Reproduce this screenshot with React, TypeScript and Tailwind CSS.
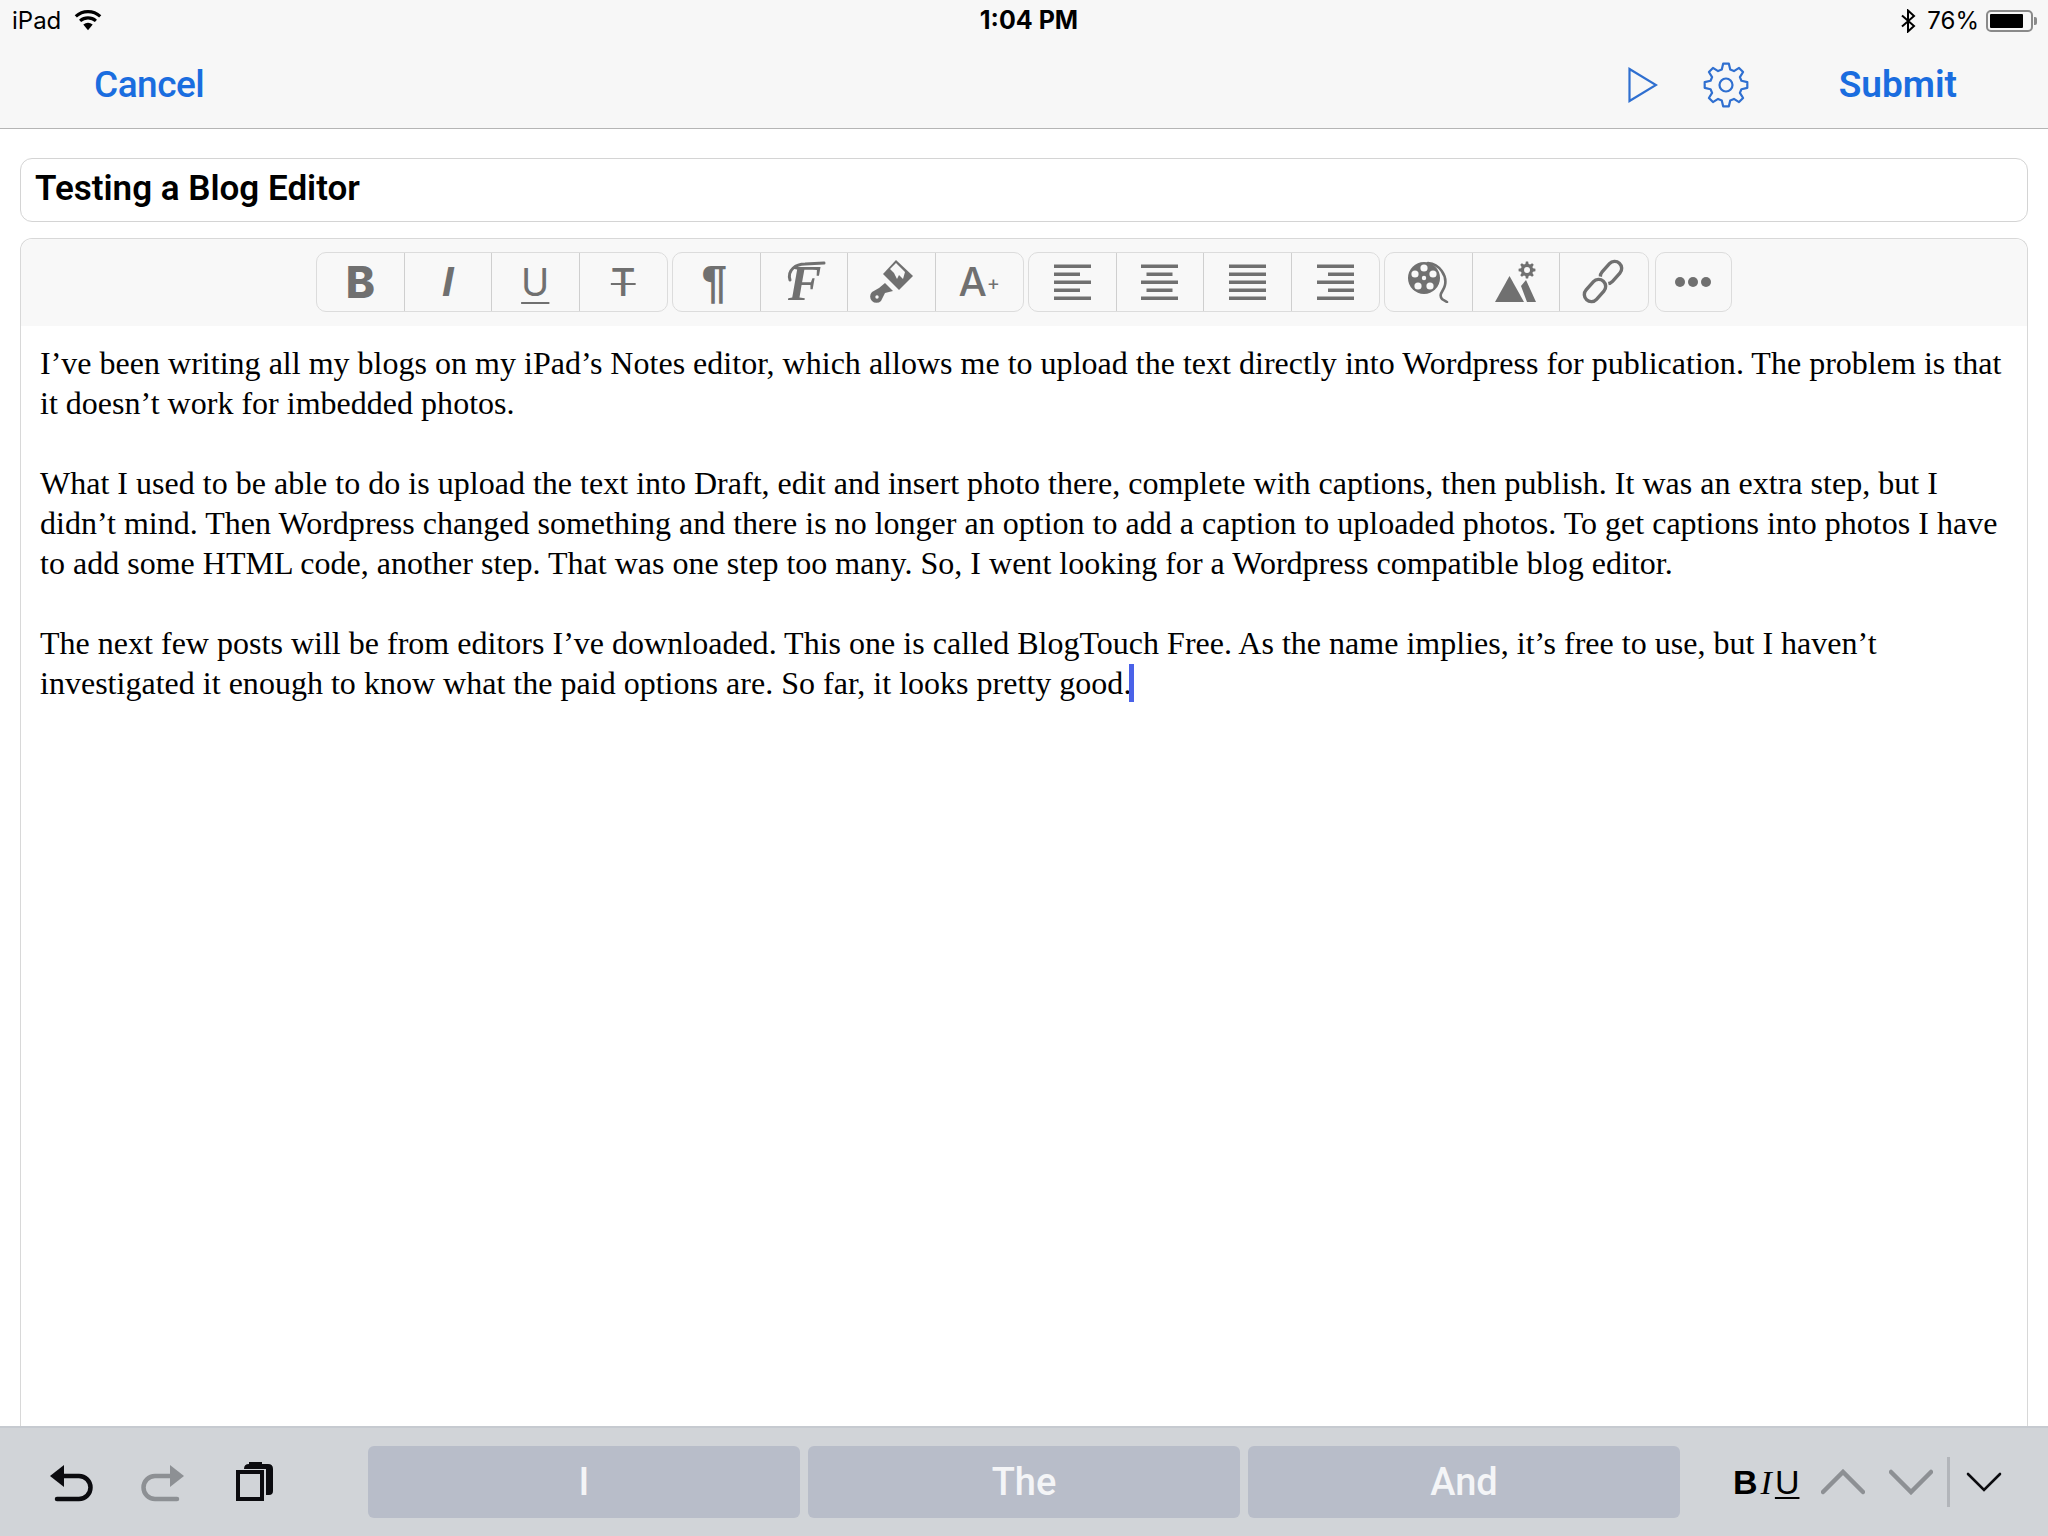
import React from "react";

const gearPath = (cx: number, cy: number, ro: number, ri: number, n: number) => {
  const pts: string[] = [];
  for (let i = 0; i < n; i++) {
    const a = (i * 2 * Math.PI) / n - Math.PI / 2;
    const s = (2 * Math.PI) / n;
    const seq: [number, number][] = [
      [ri, a - s * 0.34],
      [ro, a - s * 0.17],
      [ro, a + s * 0.17],
      [ri, a + s * 0.34],
    ];
    for (const [r, t] of seq) pts.push(`${(cx + r * Math.cos(t)).toFixed(2)} ${(cy + r * Math.sin(t)).toFixed(2)}`);
  }
  return "M" + pts.join("L") + "Z";
};

const Cell = ({ children, last }: { children: React.ReactNode; last?: boolean }) => (
  <div className={`w-[87.5px] h-full flex items-center justify-center ${last ? "" : "border-r border-[#cfcfcf]"}`}>{children}</div>
);

const Group = ({ children, className = "" }: { children: React.ReactNode; className?: string }) => (
  <div className={`h-[60px] flex border border-[#dcdcdc] rounded-[10px] ${className}`}>{children}</div>
);

const Align = ({ kind }: { kind: "l" | "c" | "j" | "r" }) => {
  const short = kind === "j" ? 37 : 26;
  const x = kind === "l" ? 0 : kind === "c" ? 5.5 : kind === "r" ? 11 : 0;
  return (
    <svg width="37" height="36" fill="#707070">
      {[0, 1, 2, 3, 4].map((i) => (
        <rect key={i} x={i % 2 ? x : 0} y={i * 8 + 0.5} width={i % 2 ? short : 37} height="3.5" />
      ))}
    </svg>
  );
};

const sans = "[font-family:Inter,'Liberation_Sans',sans-serif]";

export default function App() {
  return (
    <div className="w-[2048px] h-[1536px] flex flex-col bg-white overflow-hidden [font-family:Inter,'Liberation_Sans',sans-serif]">
      <header className="h-[129px] shrink-0 bg-[#f7f7f7] border-b border-[#b5b5b5] flex flex-col">
        <div className="h-[40px] flex items-center justify-between pl-[12px] pr-[11px] pt-[1px] text-[24px] text-black">
          <div className="flex items-center gap-[12px] w-[400px]">
            <span>iPad</span>
            <svg width="30" height="24" viewBox="0 0 28 22" className="mb-[2px]">
              <path d="M14 20.5 L9.6 15.3 A7 7 0 0 1 18.4 15.3 Z" fill="#000" />
              <path d="M6.6 11.8 A11.5 11.5 0 0 1 21.4 11.8" fill="none" stroke="#000" strokeWidth="3" />
              <path d="M2.6 7.6 A17 17 0 0 1 25.4 7.6" fill="none" stroke="#000" strokeWidth="3" />
            </svg>
          </div>
          <span className="font-bold text-[25px] ml-[9px]">1:04 PM</span>
          <div className="flex items-center justify-end w-[400px]">
            <svg width="16" height="24" viewBox="0 0 16 24" fill="none" stroke="#000" strokeWidth="2">
              <path d="M2 6.5 L14 17 L8 22.5 V1.5 L14 7 L2 17.5" />
            </svg>
            <span className="ml-[11px]">76%</span>
            <div className="ml-[7px] w-[47px] h-[22px] border-2 border-[#8a8a8a] rounded-[5px] p-[2px]">
              <div className="w-[33px] h-full bg-black rounded-[1px]" />
            </div>
            <div className="ml-[1px] w-[3px] h-[8px] bg-[#8a8a8a] rounded-r-[2px]" />
          </div>
        </div>
        <div className="flex-1 flex items-center justify-between pl-[94px] pr-[91px] text-[37px] text-[#1a6ddf] [font-family:Roboto,sans-serif] font-medium">
          <span className="mt-[2px] tracking-[-0.5px]">Cancel</span>
          <div className="flex items-center mt-[2px]">
            <svg width="30" height="36" viewBox="0 0 30 36" fill="none" stroke="#2f6fd0" strokeWidth="2.2">
              <path d="M1.5 2 L28 18 L1.5 34 Z" />
            </svg>
            <svg width="46" height="46" viewBox="0 0 46 46" fill="none" stroke="#2f6fd0" strokeWidth="2.2" strokeLinejoin="round" className="ml-[45px]">
              <path d={gearPath(23, 23, 21.5, 16, 8)} />
              <circle cx="23" cy="23" r="6.5" />
            </svg>
            <span className="ml-[90px] font-semibold">Submit</span>
          </div>
        </div>
      </header>

      <main className="flex-1 min-h-0 flex flex-col px-[20px] pt-[29px]">
        <div className="h-[64px] shrink-0 border border-[#d4d4d4] rounded-[12px] flex items-center pl-[14px] pb-[1px] text-[35px] font-semibold text-black [font-family:Roboto,sans-serif]">
          Testing a Blog Editor
        </div>
        <section className="flex-1 min-h-0 mt-[16px] border border-b-0 border-[#d8d8d8] rounded-t-[12px] flex flex-col">
          <div className="h-[87px] shrink-0 bg-[#f8f8f8] rounded-t-[12px] flex items-center pl-[295px] pb-[2px] text-[#707070]">
            <Group>
              <Cell><span className={`${sans} text-[44px] font-extrabold leading-none`}>B</span></Cell>
              <Cell><span className="[font-family:'Liberation_Sans',sans-serif] italic text-[42px] font-bold leading-none">I</span></Cell>
              <Cell><span className={`${sans} text-[38px] leading-none underline decoration-2 underline-offset-[6px]`}>U</span></Cell>
              <Cell last><span className={`${sans} text-[38px] font-medium leading-none line-through decoration-2`}>T</span></Cell>
            </Group>
            <Group className="ml-[4px]">
              <Cell><span className="[font-family:'Liberation_Sans',sans-serif] font-bold text-[46px] leading-none mr-[4px]">¶</span></Cell>
              <Cell>
                <span className="relative w-[60px] h-[55px] flex items-center justify-center">
                  <span className="[font-family:'Liberation_Serif',serif] italic font-bold text-[50px] leading-none mt-[2px] ml-[2px]">F</span>
                  <svg width="60" height="55" viewBox="0 0 60 55" fill="none" stroke="#707070" strokeLinecap="round" className="absolute left-0 top-0">
                    <path d="M16 26 C13 16 22 10 31 10 L50 9" strokeWidth="3" />
                  </svg>
                </span>
              </Cell>
              <Cell>
                <svg width="60" height="55" viewBox="0 0 60 55" fill="#707070">
                  <path d="M35 6 L52 22 L38 36 L22 20 Z" />
                  <path d="M29 15 L35 9 L44 18 L42 25 L38 21 L36 25 L33 19 Z" fill="#f8f8f8" />
                  <path d="M24 29 L32 37 L24 39 L20 47 A6 6 0 0 1 11 38 L18 34 Z" />
                  <circle cx="16" cy="43" r="1.7" fill="#f8f8f8" />
                </svg>
              </Cell>
              <Cell last>
                <span className={`${sans} text-[40px] font-medium leading-none`}>A</span>
                <span className={`${sans} text-[20px] leading-none mt-[2px]`}>+</span>
              </Cell>
            </Group>
            <Group className="ml-[4px]">
              <Cell><Align kind="l" /></Cell>
              <Cell><Align kind="c" /></Cell>
              <Cell><Align kind="j" /></Cell>
              <Cell last><Align kind="r" /></Cell>
            </Group>
            <Group className="ml-[4px]">
              <Cell>
                <svg width="42" height="42" viewBox="0 0 42 42">
                  <circle cx="17" cy="17" r="16" fill="#707070" />
                  {[[17, 7], [26, 13], [23, 25], [11, 25], [8, 13]].map(([x, y], i) => (
                    <circle key={i} cx={x} cy={y} r="3.6" fill="#f8f8f8" />
                  ))}
                  <circle cx="17" cy="17" r="2.2" fill="#f8f8f8" />
                  <path d="M21 2 C33 3 40 15 38 24 C37 30 31 33 35 38 L40 41" fill="none" stroke="#707070" strokeWidth="2.6" strokeLinecap="round" />
                </svg>
              </Cell>
              <Cell>
                <svg width="42" height="42" viewBox="0 0 42 42" fill="#707070">
                  <path d="M0 41 L14.5 15 L29 41 Z" />
                  <path d="M26 25 L31 19 L41 41 L32 41 Z" />
                  <path d={gearPath(32, 9, 8.5, 6.2, 8)} />
                  <circle cx="32" cy="9" r="3" fill="#f8f8f8" />
                </svg>
              </Cell>
              <Cell last>
                <svg width="60" height="55" viewBox="0 0 60 55" fill="none" stroke="#707070" strokeWidth="3.4">
                  <rect x="30" y="6" width="14" height="25" rx="7" transform="rotate(42 37 18.5)" />
                  <rect x="14" y="24" width="14" height="25" rx="7" stroke="#f8f8f8" strokeWidth="6.5" transform="rotate(42 21 36.5)" />
                  <rect x="14" y="24" width="14" height="25" rx="7" transform="rotate(42 21 36.5)" />
                </svg>
              </Cell>
            </Group>
            <Group className="ml-[6px]">
              <div className="w-[75px] flex items-center justify-center gap-[3px]">
                <span className="w-[10px] h-[10px] rounded-full bg-[#707070]" />
                <span className="w-[10px] h-[10px] rounded-full bg-[#707070]" />
                <span className="w-[10px] h-[10px] rounded-full bg-[#707070]" />
              </div>
            </Group>
          </div>
          <div className="flex-1 pl-[19px] pr-[19px] pt-[17px] [font-family:'Liberation_Serif',serif] text-[32px] leading-[40px] text-black tracking-[0.015px]">
            <p>I’ve been writing all my blogs on my iPad’s Notes editor, which allows me to upload the text directly into Wordpress for publication. The problem is that it doesn’t work for imbedded photos.</p>
            <p className="mt-[40px]">What I used to be able to do is upload the text into Draft, edit and insert photo there, complete with captions, then publish. It was an extra step, but I didn’t mind. Then Wordpress changed something and there is no longer an option to add a caption to uploaded photos. To get captions into photos I have to add some HTML code, another step. That was one step too many. So, I went looking for a Wordpress compatible blog editor.</p>
            <p className="mt-[40px]">The next few posts will be from editors I’ve downloaded. This one is called BlogTouch Free. As the name implies, it’s free to use, but I haven’t investigated it enough to know what the paid options are. So far, it looks pretty good.<span className="inline-block align-[-8px] -ml-[2px] w-[5px] h-[38px] bg-[#4a62e8]" /></p>
          </div>
        </section>
      </main>

      <footer className="h-[110px] shrink-0 bg-[#d1d4d8] border-t-2 border-[#c6cad0] flex items-center pl-[49px]">
        <svg width="44" height="40" viewBox="0 0 44 40" fill="none" stroke="#0b0b0f" strokeWidth="4.5" strokeLinecap="round">
          <path d="M8 37 H30 A11.5 11.5 0 0 0 30 14 H12" />
          <path d="M1 14 L15 3 V25 Z" fill="#0b0b0f" stroke="none" />
        </svg>
        <svg width="44" height="40" viewBox="0 0 44 40" fill="none" stroke="#8d9094" strokeWidth="4.5" strokeLinecap="round" className="ml-[48px]">
          <path d="M36 37 H14 A11.5 11.5 0 0 1 14 14 H32" />
          <path d="M43 14 L29 3 V25 Z" fill="#8d9094" stroke="none" />
        </svg>
        <svg width="38" height="42" viewBox="0 0 38 42" className="ml-[51px]" fill="none">
          <path d="M8 8 Q8 3 13 3 V1 H26 V3 H32 Q37 3 37 8 V30 Q37 34 33 34 H30 V8 Z" fill="#0b0b0f" />
          <rect x="2" y="11" width="24" height="27" stroke="#0b0b0f" strokeWidth="4" fill="#d1d4d8" />
        </svg>
        <div className="ml-[94px] flex gap-[8px] text-[38px] font-medium text-[#f4f5f7] [font-family:Roboto,sans-serif]">
          <div className="w-[432px] h-[72px] bg-[#b8bdc9] rounded-[6px] flex items-center justify-center">I</div>
          <div className="w-[432px] h-[72px] bg-[#b8bdc9] rounded-[6px] flex items-center justify-center">The</div>
          <div className="w-[432px] h-[72px] bg-[#b8bdc9] rounded-[6px] flex items-center justify-center">And</div>
        </div>
        <div className="ml-[53px] flex items-baseline text-[34px] text-black leading-none">
          <span className="[font-family:'Liberation_Sans',sans-serif] font-bold">B</span>
          <span className="[font-family:'Liberation_Serif',serif] italic ml-[3px]">I</span>
          <span className="[font-family:'Liberation_Sans',sans-serif] underline underline-offset-[3px] decoration-2 ml-[3px]">U</span>
        </div>
        <svg width="44" height="26" viewBox="0 0 44 26" fill="none" stroke="#8d9094" strokeWidth="4.5" strokeLinecap="round" className="ml-[22px]">
          <path d="M2 23 L22 3 L42 23" />
        </svg>
        <svg width="44" height="26" viewBox="0 0 44 26" fill="none" stroke="#8d9094" strokeWidth="4.5" strokeLinecap="round" className="ml-[24px]">
          <path d="M2 3 L22 23 L42 3" />
        </svg>
        <div className="ml-[14px] w-[3px] h-[50px] bg-[#b2b5ba]" />
        <svg width="36" height="22" viewBox="0 0 36 22" fill="none" stroke="#0b0b0f" strokeWidth="2.6" strokeLinecap="round" className="ml-[16px]">
          <path d="M2 3 L18 19 L34 3" />
        </svg>
      </footer>
    </div>
  );
}
